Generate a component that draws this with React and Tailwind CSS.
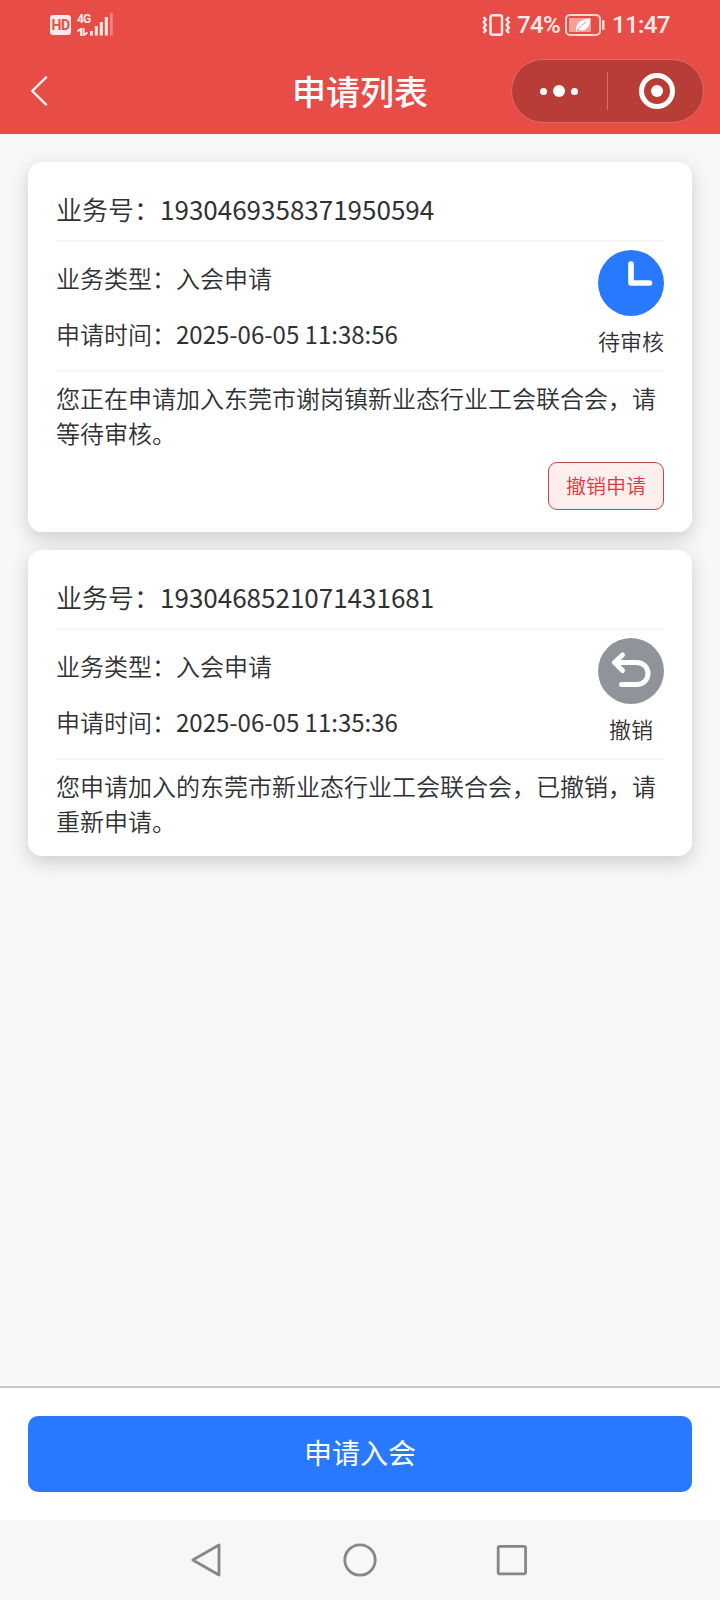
import React from 'react'

const applyList = [
  {
    id: '1930469358371950594',
    type: '入会申请',
    time: '2025-06-05 11:38:56',
    status: 'pending',
    statusText: '待审核',
    message: '您正在申请加入东莞市谢岗镇新业态行业工会联合会，请等待审核。',
  },
  {
    id: '1930468521071431681',
    type: '入会申请',
    time: '2025-06-05 11:35:36',
    status: 'revoked',
    statusText: '撤销',
    message: '您申请加入的东莞市新业态行业工会联合会，已撤销，请重新申请。',
  },
];

function SignalIcons() {
  return (
    <div className="flex items-start gap-[6px] pt-[13px]">
      <div className="mt-[2px] flex h-[20px] w-[21px] items-center justify-center rounded-[3px] bg-[#fde9e7] text-[14px] font-bold leading-none tracking-[-0.5px] text-[#e84c46]">
        HD
      </div>
      <div className="flex items-end">
        <div className="flex w-[13px] flex-col">
          <span className="text-[12px] font-bold leading-[11px] tracking-[-1px] text-[#fde9e7]">4G</span>
          <svg className="mt-[3px]" width="12" height="8" viewBox="0 0 12 8" fill="none" stroke="#fde9e7" strokeWidth="2">
            <path d="M0.5 3.5L4 0.8V8M6.5 0V7.2L10.5 4.5" />
          </svg>
        </div>
        <svg width="24" height="23" viewBox="0 0 24 23" fill="#fde9e7">
          <rect x="0" y="18" width="2.8" height="4.5" />
          <rect x="4.8" y="13" width="3" height="9.5" />
          <rect x="9.8" y="9" width="3" height="13.5" />
          <rect x="14.8" y="4" width="3" height="18.5" />
          <rect x="20" y="0" width="2.8" height="22.5" opacity="0.35" />
        </svg>
      </div>
    </div>
  )
}

function StatusBar() {
  return (
    <div className="flex h-12 justify-between pl-[50px] pr-[51px] font-['Roboto',sans-serif]">
      <SignalIcons />
      <div className="flex h-[50px] items-center text-[24px] font-medium leading-none text-[#fdebe9]">
        <svg className="mr-[6px]" width="29" height="22" viewBox="0 0 29 22" fill="none" stroke="#fdebe9" strokeWidth="2.4">
          <rect x="8.5" y="1.2" width="11.5" height="19.6" rx="2" />
          <path d="M1.5 3L3.8 5.5L1.7 8.3L3.8 11L1.7 13.7L3.8 16.5L1.5 19" />
          <path d="M27 3L24.7 5.5L26.8 8.3L24.7 11L26.8 13.7L24.7 16.5L27 19" />
        </svg>
        <span className="w-[48px] tracking-[-0.6px]">74%</span>
        <svg className="mr-[7px]" width="40" height="22" viewBox="0 0 40 22" fill="none">
          <rect x="1" y="1" width="34" height="20" rx="4" stroke="#fdd5d1" strokeWidth="2" />
          <rect x="4" y="4" width="22" height="14" rx="1" fill="#f5a09b" />
          <path d="M11 17C10.5 9 15 6 25 4C25.5 12 21.5 18 13.5 16L11.5 18Z" fill="#fff" />
          <path d="M12 17C15 12.5 18 10 21 8" stroke="#f08c86" strokeWidth="1" />
          <rect x="37" y="6" width="2.6" height="10" rx="1" fill="#fdd5d1" />
        </svg>
        <span className="w-[57px] tracking-[-0.6px]">11:47</span>
      </div>
    </div>
  )
}

function NavBar() {
  return (
    <div className="flex h-[86px] items-center">
      <div className="flex-1">
        <svg className="ml-[30px]" width="18" height="30" viewBox="0 0 18 30" fill="none" stroke="#fff" strokeWidth="2.4" strokeLinecap="round" strokeLinejoin="round">
          <path d="M16 1.5L2.2 15L16 28.5" />
        </svg>
      </div>
      <h1 className="text-[34px] font-medium leading-[48px] text-white">申请列表</h1>
      <div className="flex flex-1 justify-end">
        <div className="mr-4 flex h-16 w-[193px] items-center rounded-full border border-[#dc6c66] bg-[#b83d36]">
          <div className="flex w-[95px] items-center justify-center gap-[6px] pr-[2px]">
            <span className="size-[7px] rounded-full bg-white"></span>
            <span className="size-[12px] rounded-full bg-white"></span>
            <span className="size-[7px] rounded-full bg-white"></span>
          </div>
          <div className="h-[38px] w-px bg-[#d0706a]"></div>
          <div className="flex flex-1 items-center justify-center pl-[2px]">
            <div className="flex size-[36px] items-center justify-center rounded-full border-[5px] border-white">
              <span className="size-[12px] rounded-full bg-white"></span>
            </div>
          </div>
        </div>
      </div>
    </div>
  )
}

function StatusIcon({ status }) {
  if (status === 'pending') {
    return (
      <svg width="66" height="66" viewBox="0 0 66 66" fill="none">
        <circle cx="33" cy="33" r="33" fill="#2979ff" />
        <path d="M33 14V33H51.5" stroke="#fff" strokeWidth="5.6" strokeLinecap="round" strokeLinejoin="round" />
      </svg>
    )
  }
  return (
    <svg width="66" height="66" viewBox="0 0 66 66" fill="none">
      <circle cx="33" cy="33" r="33" fill="#909399" />
      <g stroke="#fff" strokeWidth="5" strokeLinecap="round" strokeLinejoin="round">
        <path d="M17 24.5H38.5C45.5 24.5 50 29.5 50 35.5S45.5 46.5 38.5 46.5H23.5" />
        <path d="M24.5 17L16.5 24.5L24.5 32.5" />
      </g>
    </svg>
  )
}

function ApplyCard({ item }) {
  return (
    <div className="rounded-[14px] bg-white px-7 pb-4 pt-[27px] font-[350] text-[#303133] shadow-[0_6px_20px_rgba(0,0,0,0.18)]">
      <div className="border-b-2 border-[#f5f5f5] pb-[11px] text-[26px] leading-10">
        业务号：<span className="font-normal">{item.id}</span>
      </div>
      <div className="flex h-[130px] justify-between border-b-2 border-[#f5f5f5] pt-[8px]">
        <div className="text-[24px] leading-[56px]">
          <p>业务类型：{item.type}</p>
          <p>申请时间：<span className="font-normal">{item.time}</span></p>
        </div>
        <div className="flex flex-col items-center">
          <StatusIcon status={item.status} />
          <span className="mt-[8px] text-[22px] leading-8">{item.statusText}</span>
        </div>
      </div>
      <p className="pb-[2px] pt-[8px] text-[24px] leading-[35px]">{item.message}</p>
      {item.status === 'pending' && (
        <div className="mb-[6px] mt-[10px] flex justify-end">
          <button className="h-12 w-[116px] rounded-[9px] border border-[#c8474a] bg-[#ffeeee] text-[20px] leading-none text-[#dd3b3d]">
            撤销申请
          </button>
        </div>
      )}
    </div>
  )
}

function SystemNav() {
  return (
    <div className="flex h-20 items-center justify-center gap-[118px] bg-[#f7f7f7]">
      <svg width="34" height="34" viewBox="0 0 34 34" fill="none" stroke="#878787" strokeWidth="2.8" strokeLinejoin="round">
        <path d="M28 2V32L1.8 17Z" />
      </svg>
      <svg width="34" height="34" viewBox="0 0 34 34" fill="none" stroke="#878787" strokeWidth="2.8">
        <circle cx="17" cy="17" r="15.2" />
      </svg>
      <svg width="34" height="34" viewBox="0 0 34 34" fill="none" stroke="#878787" strokeWidth="2.8">
        <rect x="3.2" y="3.4" width="27.4" height="27.4" rx="1.5" />
      </svg>
    </div>
  )
}

function App() {
  return (
    <div className="flex h-[1600px] w-[720px] flex-col overflow-hidden bg-[#f8f8f8] font-['Noto_Sans_CJK_SC',sans-serif]">
      <header className="bg-[#e84c46]">
        <StatusBar />
        <NavBar />
      </header>

      <main className="flex flex-1 flex-col gap-[18px] px-7 pt-7">
        {applyList.map((item) => (
          <ApplyCard key={item.id} item={item} />
        ))}
      </main>

      <footer>
        <div className="border-t-2 border-[#c8c8c8] bg-white p-7">
          <button className="h-[76px] w-full rounded-[10px] bg-[#2979ff] pb-[5px] text-[28px] leading-none text-white">
            申请入会
          </button>
        </div>
        <SystemNav />
      </footer>
    </div>
  )
}

export default App
